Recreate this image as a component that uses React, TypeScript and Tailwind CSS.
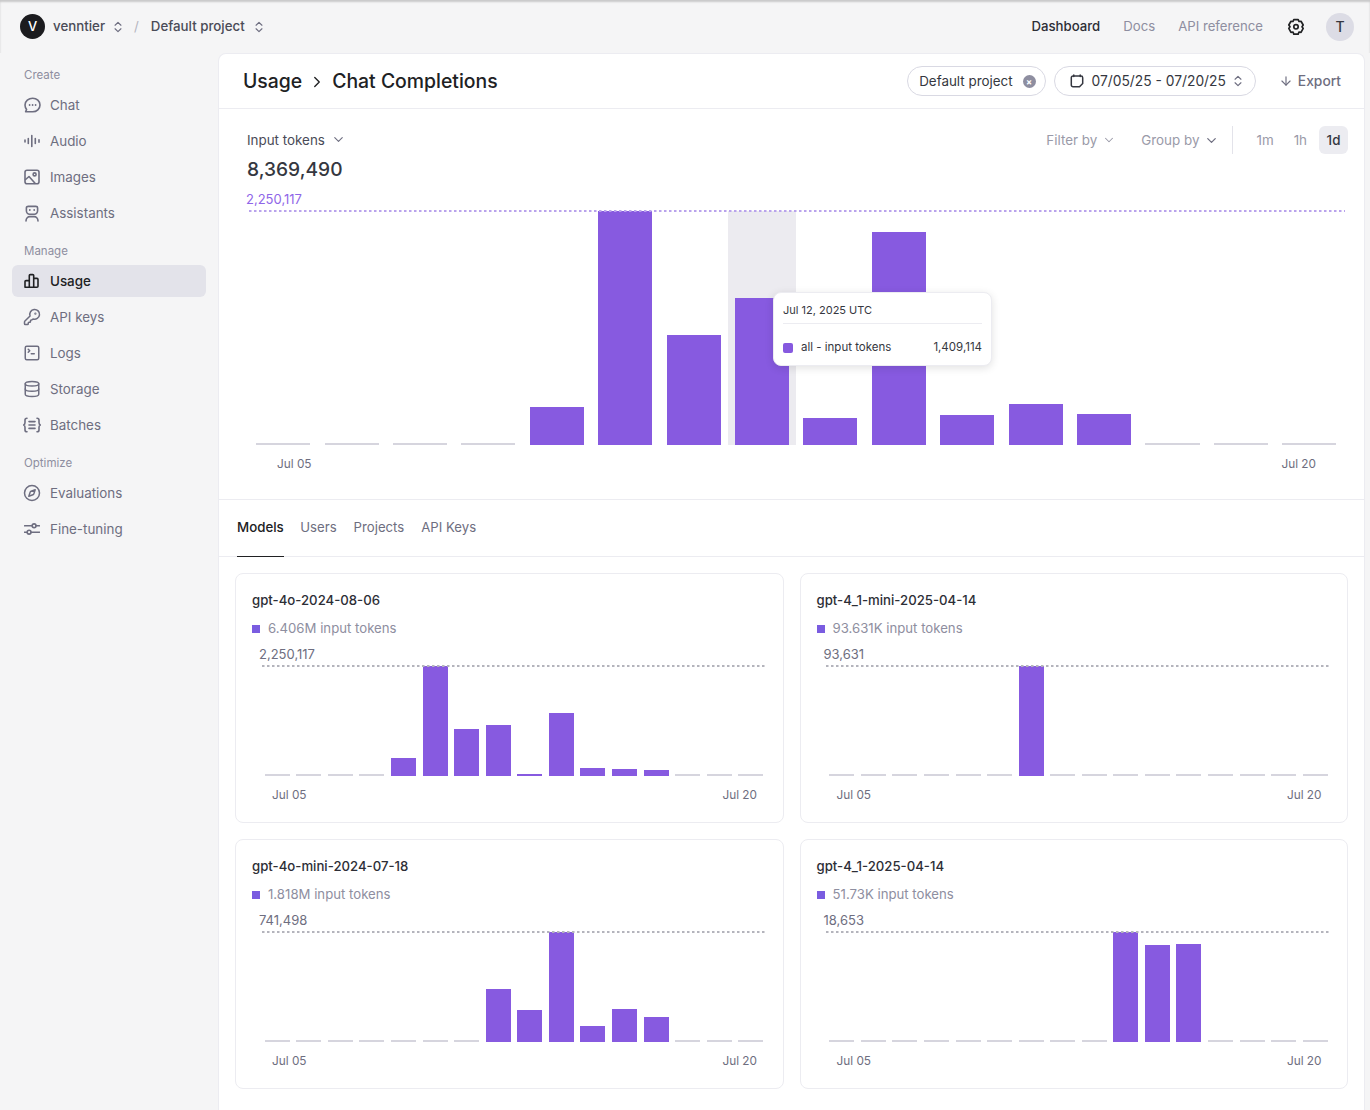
import { ArrowDown, ChevronDown, ChevronRight, ChevronsUpDown, Compass, Database, KeyRound, SquareTerminal } from "lucide-react";
import type { ReactNode } from "react";

// Sidebar icons that lucide has no close match for
function ChatIcon() {
  return (
    <svg width="17" height="17" viewBox="0 0 17 17" fill="none" stroke="currentColor" strokeWidth="1.6" strokeLinejoin="round">
      <path d="M8.7 1.2c4 0 7.3 3 7.3 6.8s-3.3 6.8-7.3 6.8H1.6l1-2.4C1.6 11.2 1 9.7 1 8c0-3.8 3.6-6.8 7.7-6.8z" />
      <circle cx="5.6" cy="8" r=".9" fill="currentColor" stroke="none" />
      <circle cx="8.6" cy="8" r=".9" fill="currentColor" stroke="none" />
      <circle cx="11.6" cy="8" r=".9" fill="currentColor" stroke="none" />
    </svg>
  );
}

function AudioIcon() {
  return (
    <svg width="16" height="16" viewBox="0 0 16 16" fill="none" stroke="currentColor" strokeWidth="1.6" strokeLinecap="round">
      <path d="M1 7v2M4.3 5.5v5M7.8 2.5v11M11.3 5.5v5M15 6.8v2.4" />
    </svg>
  );
}

function ImagesIcon() {
  return (
    <svg width="16" height="16" viewBox="0 0 16 16" fill="none" stroke="currentColor" strokeWidth="1.6" strokeLinejoin="round">
      <rect x="1" y="1.2" width="14" height="13.6" rx="2" />
      <circle cx="10.6" cy="5.4" r="1.5" />
      <path d="M1 11 5 7.5l6.5 7.3" />
    </svg>
  );
}

function BotIcon() {
  return (
    <svg width="16" height="17" viewBox="0 0 16 17" fill="none" stroke="currentColor" strokeWidth="1.6" strokeLinecap="round">
      <path d="M2.4 2.8C2.4 1.8 3.2 1.4 4.2 1.4h7.6c1 0 1.8.4 1.8 1.4v3C13.6 7.7 12.2 9.2 10.4 9.2H5.6C3.8 9.2 2.4 7.7 2.4 5.8z" />
      <circle cx="5.8" cy="5" r=".9" fill="currentColor" stroke="none" />
      <circle cx="10.2" cy="5" r=".9" fill="currentColor" stroke="none" />
      <path d="M2 16c0-2.8 2-4.4 3.8-4.4h4.4c1.8 0 3.8 1.6 3.8 4.4" />
    </svg>
  );
}

function UsageIcon() {
  return (
    <svg width="16" height="16" viewBox="0 0 16 16" fill="none" stroke="currentColor" strokeWidth="1.6" strokeLinejoin="round">
      <path d="M1 14.2V8.6c0-.6.4-1 1-1h3.3v6.6H2c-.6 0-1-.4-1-1zM5.3 14.2V2.6c0-.6.4-1 1-1h2.4c.6 0 1 .4 1 1v11.6zM9.7 14.2V5.4H13c.6 0 1 .4 1 1v6.8c0 .6-.4 1-1 1z" />
    </svg>
  );
}

function BatchesIcon() {
  return (
    <svg width="18" height="16" viewBox="0 0 18 16" fill="none" stroke="currentColor" strokeWidth="1.6" strokeLinecap="round">
      <path d="M4 1.2c-1.4 0-2 .6-2 1.8v2.6C2 7 1.6 7.6.8 8c.8.4 1.2 1 1.2 2.4V13c0 1.2.6 1.8 2 1.8" />
      <path d="M14 1.2c1.4 0 2 .6 2 1.8v2.6c0 1.4.4 2 1.2 2.4-.8.4-1.2 1-1.2 2.4V13c0 1.2-.6 1.8-2 1.8" />
      <path d="M6 4.6h6M6 8h6M6 11.4h6" />
    </svg>
  );
}

function TuningIcon() {
  return (
    <svg width="16" height="16" viewBox="0 0 16 16" fill="none" stroke="currentColor" strokeWidth="1.6" strokeLinecap="round">
      <path d="M.6 4.8h7.6M12 4.8h3.4M.6 11.2h2.6M7 11.2h8.4" />
      <circle cx="10.1" cy="4.8" r="1.9" />
      <circle cx="5.1" cy="11.2" r="1.9" />
    </svg>
  );
}

function GearIcon() {
  return (
    <svg width="18" height="18" viewBox="0 0 18 18" fill="none" stroke="#202123" strokeWidth="1.7" strokeLinejoin="round">
      <path d="M6.8 1.6h4.4l.8 1.9 2-.2 2.2 3.7-1.2 1.7 1.2 1.7-2.2 3.9-2-.3-.8 2.1H6.8L6 14l-2 .3-2.2-3.9L3 8.7 1.8 7l2.2-3.7 2 .2z" />
      <circle cx="9" cy="8.8" r="2.2" />
    </svg>
  );
}

function CalendarIcon() {
  return (
    <svg width="14" height="14" viewBox="0 0 14 14" fill="none" stroke="#353740" strokeWidth="1.5" strokeLinecap="round">
      <path d="M3 2h8c1 0 1.7.7 1.7 1.7v5.800L9.500 12.700H3c-1 0-1.700-.7-1.700-1.700V3.700C1.300 2.700 2 2 3 2z" />
      <path d="M3.800 1v1.500M10.200 1v1.500" />
    </svg>
  );
}

const sections: { label: string; items: { name: string; icon: ReactNode; active?: boolean }[] }[] = [
  {
    label: "Create",
    items: [
      { name: "Chat", icon: <ChatIcon /> },
      { name: "Audio", icon: <AudioIcon /> },
      { name: "Images", icon: <ImagesIcon /> },
      { name: "Assistants", icon: <BotIcon /> },
    ],
  },
  {
    label: "Manage",
    items: [
      { name: "Usage", icon: <UsageIcon />, active: true },
      { name: "API keys", icon: <KeyRound size={18} strokeWidth={2} /> },
      { name: "Logs", icon: <SquareTerminal size={18} strokeWidth={2} /> },
      { name: "Storage", icon: <Database size={18} strokeWidth={2} /> },
      { name: "Batches", icon: <BatchesIcon /> },
    ],
  },
  {
    label: "Optimize",
    items: [
      { name: "Evaluations", icon: <Compass size={18} strokeWidth={2} /> },
      { name: "Fine-tuning", icon: <TuningIcon /> },
    ],
  },
];

const modelCards = [
  {
    title: "gpt-4o-2024-08-06",
    total: "6.406M input tokens",
    peak: "2,250,117",
    bars: [0, 0, 0, 0, 18, 110, 47, 51, 2, 63, 8, 7, 6, 0, 0, 0],
  },
  {
    title: "gpt-4_1-mini-2025-04-14",
    total: "93.631K input tokens",
    peak: "93,631",
    bars: [0, 0, 0, 0, 0, 0, 110, 0, 0, 0, 0, 0, 0, 0, 0, 0],
  },
  {
    title: "gpt-4o-mini-2024-07-18",
    total: "1.818M input tokens",
    peak: "741,498",
    bars: [0, 0, 0, 0, 0, 0, 0, 53, 32, 110, 16, 33, 25, 0, 0, 0],
  },
  {
    title: "gpt-4_1-2025-04-14",
    total: "51.73K input tokens",
    peak: "18,653",
    bars: [0, 0, 0, 0, 0, 0, 0, 0, 0, 110, 97, 98, 0, 0, 0, 0],
  },
];

const mainBars = [0, 0, 0, 0, 38, 234, 110, 147, 27, 213, 30, 41, 31, 0, 0, 0];

// Dashed line that marks the peak value on a chart
function PeakLine({ color, width }: { color: string; width: string }) {
  return (
    <svg className={`absolute left-0 top-[-1px] h-[2px] ${width}`}>
      <line x1="0" y1="1" x2="100%" y2="1" stroke={color} strokeWidth="2" strokeDasharray="2.5 2.5" />
    </svg>
  );
}

function Bars({ values, gutter, highlight }: { values: number[]; gutter: string; highlight?: number }) {
  return (
    <div className="flex h-full items-end">
      {values.map((value, index) => (
        <div
          key={index}
          className={`flex-1 h-full flex flex-col justify-end ${gutter} ${index === highlight ? "bg-[#ecebf0]" : ""}`}
        >
          {value > 0 ? (
            <div className="bg-[#875ae0]" style={{ height: value }} />
          ) : (
            <div className="h-[2px] bg-[#d6d5de]" />
          )}
        </div>
      ))}
    </div>
  );
}

function ModelCard({ card }: { card: (typeof modelCards)[number] }) {
  return (
    <div className="h-[250px] rounded-lg border border-[#ececf1] px-4 pt-[16px]">
      <div className="h-5 leading-5 text-[13.2px] font-medium text-[#2d2e36]">{card.title}</div>
      <div className="mt-[9px] h-5 flex items-center gap-2 text-[13.2px] text-[#8e8ea0]">
        <span className="w-2 h-2 bg-[#7a5ce0]" />
        {card.total}
      </div>
      <div className="mt-[5px] h-5 leading-5 pl-[7px] text-[13px] text-[#6e6e80]">{card.peak}</div>
      <div className="relative mt-[2px] ml-[9.5px] h-[110px]">
        <PeakLine color="#b4b4bc" width="w-full" />
        <Bars values={card.bars} gutter="px-[3.3px]" />
      </div>
      <div className="mt-[9px] flex justify-between pl-[20px] pr-[9.5px] text-[11.8px] leading-5 text-[#6e6e80]">
        <span>Jul 05</span>
        <span>Jul 20</span>
      </div>
    </div>
  );
}

export default function App() {
  return (
    <div className="h-[1110px] overflow-hidden flex flex-col bg-[#f5f5f6] font-[Inter,sans-serif] text-[#353740]">
      {/* Top bar */}
      <header className="h-[53px] shrink-0 flex items-center justify-between pl-5 pr-4 text-[13.3px] shadow-[inset_0_2px_2px_rgba(0,0,0,0.18)]">
        <div className="flex items-center">
          <span className="w-[25px] h-[25px] rounded-full bg-[#1c1c1f] text-white text-[13px] font-medium flex items-center justify-center">
            V
          </span>
          <span className="ml-2 font-medium text-[#4a4b57]">venntier</span>
          <ChevronsUpDown size={14} strokeWidth={2} className="ml-[6px] text-[#6e6e80]" />
          <span className="ml-[9px] text-[#b4b4c0]">/</span>
          <span className="ml-[12px] font-medium text-[#4a4b57]">Default project</span>
          <ChevronsUpDown size={14} strokeWidth={2} className="ml-[7px] text-[#6e6e80]" />
        </div>
        <div className="flex items-center text-[13.2px]">
          <span className="font-medium text-[#2d2e36]">Dashboard</span>
          <span className="ml-[23px] text-[#8e8ea0]">Docs</span>
          <span className="ml-[23px] text-[#8e8ea0]">API reference</span>
          <span className="ml-6">
            <GearIcon />
          </span>
          <span className="ml-[21px] w-[28px] h-[28px] rounded-full bg-[#dcdce5] text-[14px] text-[#353740] font-medium flex items-center justify-center">
            T
          </span>
        </div>
      </header>

      <div className="flex-1 flex min-h-0">
        {/* Sidebar */}
        <aside className="w-[218px] shrink-0 pt-[13px] px-3">
          {sections.map((section) => (
            <div key={section.label} className="mb-[13px]">
              <div className="h-[18px] leading-[18px] pl-3 mb-[5px] text-[11.5px] text-[#8e8ea0]">{section.label}</div>
              <div className="w-[194px] flex flex-col gap-1">
                {section.items.map((item) => (
                  <div
                    key={item.name}
                    className={`h-8 flex items-center rounded-md pl-3 text-[13.4px] ${
                      item.active ? "bg-[#e3e3ea] font-medium text-[#202123]" : "text-[#6e6e80]"
                    }`}
                  >
                    <span className="w-4 flex justify-center shrink-0 [&>svg]:shrink-0">{item.icon}</span>
                    <span className="ml-[10px]">{item.name}</span>
                  </div>
                ))}
              </div>
            </div>
          ))}
        </aside>

        {/* Main panel */}
        <main className="flex-1 mr-[5px] bg-white rounded-t-lg border border-[#ececf1] border-b-0">
          <div className="h-[55px] flex items-center justify-between pl-6 pr-[23px] border-b border-[#ececf1]">
            <div className="flex items-center pt-[2px] text-[19.4px] font-medium text-[#202123]">
              <span>Usage</span>
              <ChevronRight size={18} strokeWidth={1.8} className="ml-[6px] mr-[6px]" />
              <span>Chat Completions</span>
            </div>
            <div className="flex items-center text-[13.4px]">
              <div className="h-[30px] flex items-center rounded-full border border-[#d9d9e3] pl-[11px] pr-[9px] text-[#353740]">
                Default project
                <span className="ml-[10px] w-[13px] h-[13px] rounded-full bg-[#8e8ea0] text-white text-[9px] leading-none font-bold flex items-center justify-center">
                  ×
                </span>
              </div>
              <div className="ml-2 h-[30px] flex items-center rounded-full border border-[#d9d9e3] pl-[15px] pr-[10px] text-[13.8px] text-[#353740]">
                <CalendarIcon />
                <span className="ml-[8px]">07/05/25 - 07/20/25</span>
                <ChevronsUpDown size={14} strokeWidth={2} className="ml-[5px] text-[#6e6e80]" />
              </div>
              <div className="ml-[23px] flex items-center font-medium text-[13.8px] text-[#6e6e80]">
                <ArrowDown size={14} strokeWidth={2} className="mr-[5px]" />
                Export
              </div>
            </div>
          </div>

          {/* Main chart */}
          <section className="h-[391px] border-b border-[#ececf1] pt-[17px] pl-[28px] pr-4">
            <div className="flex items-center justify-between h-7">
              <div className="flex items-center text-[13.4px] text-[#4a4b57]">
                Input tokens
                <ChevronDown size={15} strokeWidth={1.8} className="ml-[6px] text-[#6e6e80]" />
              </div>
              <div className="flex items-center text-[13.4px] text-[#9a9aa8]">
                Filter by
                <ChevronDown size={14} strokeWidth={1.8} className="ml-[5px]" />
                <span className="ml-[25px]">Group by</span>
                <ChevronDown size={15} strokeWidth={2} className="ml-[5px] text-[#6e6e80]" />
                <span className="ml-[13px] w-px h-7 bg-[#e3e3ea]" />
                <span className="ml-[23px]">1m</span>
                <span className="ml-5">1h</span>
                <span className="ml-3 w-[29px] h-7 rounded-md bg-[#ececf1] text-[#353740] font-medium flex items-center justify-center">
                  1d
                </span>
              </div>
            </div>
            <div className="mt-px h-7 leading-7 text-[19.2px] font-medium text-[#353740]">8,369,490</div>
            <div className="mt-[7px] -ml-px h-[18px] leading-[18px] text-[13px] text-[#8f66e8]">2,250,117</div>
            <div className="relative mt-[3px] ml-[2px] mr-[4.6px] h-[234px]">
              <PeakLine color="#b9a3ec" width="w-[calc(100%+2px)]" />
              <Bars values={mainBars} gutter="px-[7.2px]" highlight={7} />
              <div className="absolute left-[524px] top-[81px] w-[219px] h-[74px] rounded-lg bg-white border border-[#ececf1] shadow-[0_2px_8px_rgba(0,0,0,0.12)] px-[9px]">
                <div className="h-[31px] leading-[34px] text-[11px] text-[#353740] border-b border-[#ececf1]">
                  Jul 12, 2025 UTC
                </div>
                <div className="mt-[15px] flex items-center text-[11.5px] text-[#353740]">
                  <span className="w-[10px] h-[10px] rounded-[2px] bg-[#8659df]" />
                  <span className="ml-2">all - input tokens</span>
                  <span className="ml-auto">1,409,114</span>
                </div>
              </div>
            </div>
            <div className="mt-[9px] flex justify-between pl-[30px] pr-[32px] text-[11.8px] leading-5 text-[#6e6e80]">
              <span>Jul 05</span>
              <span>Jul 20</span>
            </div>
          </section>

          {/* Tabs */}
          <div className="h-[57px] flex border-b border-[#ececf1] pl-[18px] text-[13.2px] text-[#6e6e80]">
            <div className="flex items-center border-b border-[#202123] -mb-px font-medium text-[13.3px] text-[#202123]">Models</div>
            <div className="ml-[16.5px] flex items-center">Users</div>
            <div className="ml-[17px] flex items-center">Projects</div>
            <div className="ml-[17px] flex items-center">API Keys</div>
          </div>

          <div className="grid grid-cols-2 gap-4 p-4">
            {modelCards.map((card) => (
              <ModelCard key={card.title} card={card} />
            ))}
          </div>
        </main>
      </div>
    </div>
  );
}
